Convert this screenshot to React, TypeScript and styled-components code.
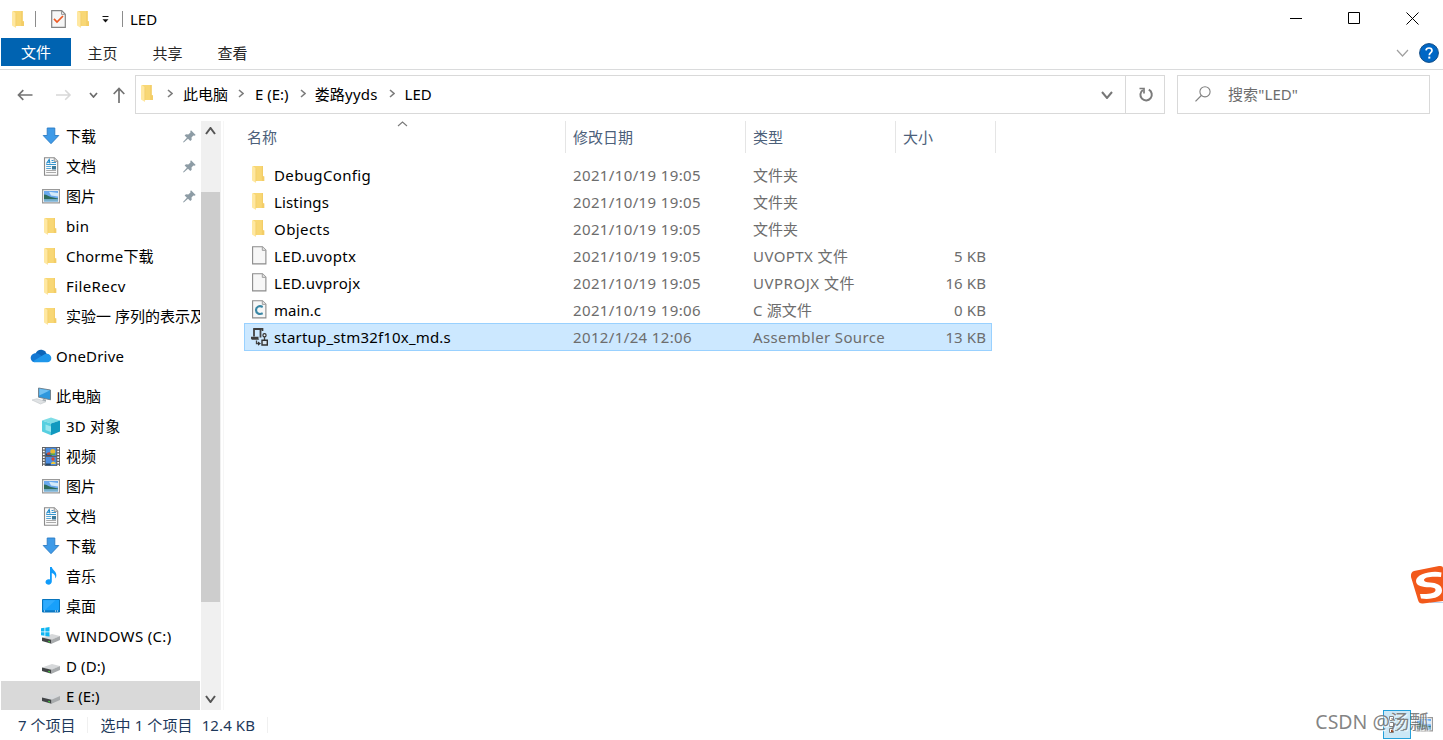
import React from "react";
import styled, { createGlobalStyle, css } from "styled-components";

const GlobalStyle = createGlobalStyle`
  * { box-sizing: border-box; }
  body {
    margin: 0;
    background: #fff;
    overflow: hidden;
    font-family: "Noto Sans", "Noto Sans CJK SC", sans-serif;
    font-size: 15px;
    line-height: 20px;
    color: #000;
  }
  svg { display: block; flex: none; }
`;

type Space = { $gap?: number; $ls?: number };

const Window = styled.div`
  position: relative;
  width: 1443px;
  height: 740px;
  display: flex;
  flex-direction: column;
  overflow: hidden;
  background: #fff;
  white-space: nowrap;
`;

const Label = styled.span<Space>`
  margin-left: ${(p) => p.$gap ?? 0}px;
  letter-spacing: ${(p) => p.$ls ?? 0}px;
  flex: none;
`;

const Slot = styled.span<Space>`
  margin-left: ${(p) => p.$gap ?? 0}px;
  flex: none;
`;

/* ---- title bar and ribbon ---- */
const TitleBar = styled.header`
  height: 38px;
  display: flex;
  align-items: center;
  padding-left: 12px;
`;
const Divider = styled.i<Space>`
  width: 1px;
  height: 16px;
  margin-left: ${(p) => p.$gap ?? 0}px;
  background: #8c8c8c;
`;
const WindowButtons = styled.div`
  margin-left: auto;
  display: flex;
  align-items: center;
  gap: 45.5px;
  padding: 0 24px 1px 0;
`;
const Ribbon = styled.nav`
  height: 32px;
  display: flex;
  align-items: flex-start;
  padding-left: 1px;
  border-bottom: 1px solid #dadbdc;
`;
const Tab = styled.div<{ $active?: boolean }>`
  width: ${(p) => (p.$active ? 70 : 65)}px;
  height: 28px;
  padding-top: ${(p) => (p.$active ? 4 : 5)}px;
  padding-right: ${(p) => (p.$active ? 0 : 2)}px;
  text-align: center;
  color: #262626;
  ${(p) => p.$active && css`
    background: #0063b1;
    color: #fff;
  `}
`;
const RibbonTools = styled.div`
  margin-left: auto;
  display: flex;
  align-items: center;
  gap: 10px;
  padding: 5px 4px 0 0;
`;

/* ---- address bar ---- */
const AddressRow = styled.div`
  height: 51px;
  display: flex;
  align-items: flex-start;
  padding: 5px 13px 0 17px;
`;
const NavButtons = styled.div`
  width: 118px;
  height: 39px;
  display: flex;
  align-items: center;
`;
const AddressBox = styled.div`
  width: 991px;
  height: 39px;
  display: flex;
  align-items: center;
  padding: 0 12px 2px 5px;
  border: 1px solid #d9d9d9;
`;
const Push = styled.span`
  margin-left: auto;
  padding-top: 3px;
`;
const RefreshBox = styled.div`
  width: 39px;
  height: 39px;
  display: flex;
  align-items: center;
  justify-content: center;
  padding-left: 2px;
  border: 1px solid #d9d9d9;
  border-left: 0;
`;
const SearchBox = styled.div`
  width: 253px;
  height: 39px;
  margin-left: 12px;
  padding: 0 0 2px 17px;
  display: flex;
  align-items: center;
  border: 1px solid #d9d9d9;
  color: #6d6d6d;
`;

/* ---- body ---- */
const Body = styled.main`
  height: 589px;
  display: flex;
`;
const Sidebar = styled.aside`
  width: 200px;
  height: 589px;
  padding-left: 1px;
  overflow: hidden;
`;
const NavRow = styled.div<{ $level: number; $spaced?: boolean; $selected?: boolean }>`
  height: 30px;
  margin-top: ${(p) => (p.$spaced ? 10 : 0)}px;
  padding-left: ${(p) => (p.$level === 1 ? 29 : 39)}px;
  display: flex;
  align-items: center;
  background: ${(p) => (p.$selected ? "#d9d9d9" : "transparent")};
`;
const NavIcon = styled.span`
  width: 22px;
  flex: none;
  display: flex;
  justify-content: center;
`;
const NavLabel = styled.span<Space>`
  margin-left: 4px;
  letter-spacing: ${(p) => p.$ls ?? 0}px;
`;
const PinSlot = styled.span`
  margin-left: auto;
  padding-right: 4px;
`;
const Scrollbar = styled.div`
  width: 20px;
  margin-left: 1px;
  display: flex;
  flex-direction: column;
  align-items: center;
  justify-content: space-between;
  background: #f0f0f0;
`;
const ScrollEnd = styled.div`
  height: 21px;
  padding: 0 2px 1px 0;
  display: flex;
  align-items: center;
`;
const Thumb = styled.div`
  width: 19px;
  height: 410px;
  margin: 50px 1px auto 0;
  background: #cdcdcd;
`;
const FilePane = styled.section`
  margin-left: 2px;
  border-left: 1px solid #f6f6f6;
  flex: 1;
`;
const HeaderRow = styled.div`
  height: 32px;
  margin-left: 15px;
  display: flex;
`;
const HeaderCell = styled.div<{ $w: number; $first?: boolean }>`
  width: ${(p) => p.$w}px;
  padding: 6px 0 0 ${(p) => (p.$first ? 8 : 7)}px;
  border-right: 1px solid #e5e5e5;
  color: #4c607a;
  display: flex;
`;
const SortMark = styled.span`
  margin: -6px 0 0 120px;
`;
const FileList = styled.div`
  margin: 8px 0 0 20px;
`;
const FileRow = styled.div<{ $selected?: boolean }>`
  width: 748px;
  height: 27px;
  display: flex;
  align-items: center;
  color: #6d6d6d;
  ${(p) => p.$selected && css`
    height: 28px;
    padding-bottom: 1px;
    background: #cce8ff;
    box-shadow: inset 0 0 0 1px #99d1ff;
  `}
`;
const FileIcon = styled.span`
  width: 30px;
  flex: none;
  display: flex;
  justify-content: center;
`;
const NameCell = styled.span<Space>`
  width: 299px;
  color: #000;
  letter-spacing: ${(p) => p.$ls ?? 0}px;
`;
const DateCell = styled.span`
  width: 180px;
  letter-spacing: 0.37px;
`;
const KindCell = styled.span<Space>`
  width: 150px;
  letter-spacing: ${(p) => p.$ls ?? 0}px;
`;
const SizeCell = styled.span`
  width: 83px;
  text-align: right;
  letter-spacing: 0.1px;
`;

/* ---- status bar and overlays ---- */
const StatusBar = styled.footer`
  height: 29px;
  display: flex;
  align-items: center;
  padding: 0 10px 0 18px;
  color: #1e395b;
`;
const StatusSplit = styled.i<Space>`
  width: 1px;
  height: 16px;
  margin-left: ${(p) => p.$gap ?? 0}px;
  background: #f0f0f0;
`;
const ViewModes = styled.div`
  margin-left: auto;
  display: flex;
  align-items: center;
  gap: 4px;
`;
const ViewMode = styled.div`
  width: 28px;
  height: 29px;
  display: flex;
  align-items: center;
  justify-content: center;
  background: #cce8f6;
  border: 1px solid #26a0da;
`;
const Watermark = styled.div`
  position: absolute;
  right: 14px;
  top: 709px;
  font-size: 19.5px;
  line-height: 26px;
  color: rgba(110, 110, 110, 0.85);
  text-shadow: 1px 1px 1px rgba(255, 255, 255, 0.9);
`;
const ImeBadge = styled.div`
  position: absolute;
  right: 0;
  top: 564px;
`;

/* ---- icons ---- */
const Folder = ({ h = 17 }: { h?: number }) => (
  <svg width="13" height={h} viewBox="0 0 13 17" preserveAspectRatio="none">
    <path d="M1 0h9.5v10.2H12V15H1z" fill="#f8d775" />
    <path d="M9.3 0h1.4v10.4H12V15H9.3z" fill="#f3cd67" />
    <path d="M0 .3h1.2L4 2.4V17L0 14.6z" fill="#ffe8a1" />
    <path d="M3.6 2.2h.6v13h-.6z" fill="#edc65e" />
  </svg>
);
/* Row folder with one empty column on the right, so it sits left of centre. */
const RowFolder = ({ h = 17 }: { h?: number }) => (
  <svg width="15" height={h} viewBox="0 0 15 17" preserveAspectRatio="none">
    <path d="M1 0h10v10.200h1.200V15H1z" fill="#f8d775" />
    <path d="M9.800 0H11v10.400h1.200V15H9.800z" fill="#f3cd67" />
    <path d="M0 .3h1.200L4 2.400V17L0 14.600z" fill="#ffe8a1" />
    <path d="M3.600 2.200h.6v13h-.6z" fill="#edc65e" />
  </svg>
);
const CheckDoc = () => (
  <svg width="15" height="18" viewBox="0 0 15 18">
    <path d="M.7.7h10l3.6 3.6v13H.7z" fill="#f6f6f6" stroke="#848484" strokeWidth="1.2" />
    <path d="M10.5.8v3.6h3.7" fill="none" stroke="#9a9a9a" />
    <path d="M3 8.8l3 3.2L12 6" fill="none" stroke="#ee5a24" strokeWidth="1.7" />
  </svg>
);
const QuickMenu = () => (
  <svg width="8" height="8" viewBox="0 0 8 8">
    <path d="M.5 1h6v1.100h-6zM.5 4.200h6L3.500 7.500z" fill="#111" />
  </svg>
);
const Chevron = ({ w = 9, h = 5, dir = "down", color = "#6b6b6b", sw = 1.7 }: {
  w?: number; h?: number; dir?: "down" | "up" | "right"; color?: string; sw?: number;
}) => {
  const d = dir === "down" ? `M1 1L${w / 2} ${h - 1}L${w - 1} 1`
    : dir === "up" ? `M1 ${h - 1}L${w / 2} 1L${w - 1} ${h - 1}`
    : `M1 1L${w - 1} ${h / 2}L1 ${h - 1}`;
  return (
    <svg width={w} height={h} viewBox={`0 0 ${w} ${h}`}>
      <path d={d} fill="none" stroke={color} strokeWidth={sw} />
    </svg>
  );
};
const Crumb = () => <Chevron dir="right" w={6} h={9} color="#7d7d7d" sw={1.6} />;
const Arrow = ({ up }: { up?: boolean }) => (
  <svg width="16" height="16" viewBox="0 0 16 16">
    <path
      d={up ? "M8 16.500V1.500M2.700 7L8 1.500L13.300 7" : "M15.500 8H1.500M6.300 3.200L1.500 8L6.300 12.800"}
      fill="none" stroke="#737373" strokeWidth="1.700"
    />
  </svg>
);
const Forward = () => (
  <svg width="16" height="16" viewBox="0 0 16 16">
    <path d="M0 8h14M9.200 3.200L14 8L9.200 12.800" fill="none" stroke="#d8d8d8" strokeWidth="1.600" />
  </svg>
);
const Refresh = () => (
  <svg width="16" height="17" viewBox="0 0 16 17">
    <path d="M10.800 3.700A5.700 5.700 0 1 1 4.900 4" fill="none" stroke="#7b7b7b" strokeWidth="2" />
    <path d="M1.500 2.500h4.500v5" fill="none" stroke="#7b7b7b" strokeWidth="1.700" />
  </svg>
);
const Search = () => (
  <svg width="16" height="16" viewBox="0 0 16 16">
    <circle cx="10" cy="5.800" r="5.100" fill="none" stroke="#808080" strokeWidth="1.100" />
    <path d="M6.300 9.500L.5 15.300" stroke="#808080" strokeWidth="1.200" />
  </svg>
);
const Help = () => (
  <svg width="20" height="20" viewBox="0 0 20 20">
    <circle cx="10" cy="10" r="9.400" fill="#0067c5" stroke="#124d86" />
    <path d="M7 7.300C7.200 5.600 8.500 5 10 5c1.700 0 3 .9 3 2.500 0 2.100-2.700 2.200-2.700 4.700" fill="none" stroke="#fff" strokeWidth="1.700" />
    <path d="M9.300 13.600h2v2h-2z" fill="#fff" />
  </svg>
);
const Download = () => (
  <svg width="18" height="18" viewBox="0 0 18 18">
    <path d="M5.200 1h7.600v7.500h4L9 16.700 1.200 8.500h4z" fill="#3f9be8" stroke="#2b7cc4" strokeWidth=".9" />
  </svg>
);
const Document = () => (
  <svg width="16" height="19" viewBox="0 0 16 19">
    <path d="M1.500.8h9.800l3.400 3.400v14H1.500z" fill="#fafafa" stroke="#8a8a8a" strokeWidth="1.100" />
    <path d="M11.200.9v3.500h3.400" fill="#ddd" stroke="#8a8a8a" strokeWidth=".8" />
    <path d="M3.500 6.500L6.200 2.500 7 6.500M4.600 5.300h2.300" fill="none" stroke="#1e88c9" strokeWidth="1.100" />
    <path d="M8.500 3.500h2M8.500 5.500H13M3.200 7.500H13" stroke="#3796cf" />
    <path d="M3.200 9.500h5M3.200 11.500h5" stroke="#56a8d8" />
    <path d="M9 9h4v3.500H9z" fill="#3d7a9a" />
    <path d="M3.200 13.500H13M3.200 15.500H13" stroke="#aaa" />
  </svg>
);
const Picture = () => (
  <svg width="18" height="15" viewBox="0 0 18 15">
    <path d="M.6.6h16.800v13.300H.6z" fill="#fff" stroke="#999" strokeWidth="1.200" />
    <path d="M2 2h14v10.500H2z" fill="#6aa9ee" />
    <path d="M7 2.800L16 4v3.500L9 6.500z" fill="#d4eafa" />
    <path d="M2 5.500c3 0 4 1.500 7 2.500l7 1.500v1H2z" fill="#2f6c5c" />
    <path d="M2 10.200h14v2.300H2z" fill="#7ab2cf" />
  </svg>
);
const Cloud = () => (
  <svg width="22" height="14" viewBox="0 0 22 14">
    <path d="M5.500 4.500C7 .8 11.500-.6 15 2.300l1.700 2.500L10 9z" fill="#0a64b8" />
    <path d="M1 10.500C-.2 7.200 2.500 4 6 4.200c1.500 0 2.600.5 3.600 1.200l6 4.300-11 3.600C3 13.300 1.500 12 1 10.500z" fill="#1277d2" />
    <path d="M3 12.200L14.500 5.200c3.500-1.600 6.500.7 6.800 3.500.2 2.800-1.700 4.600-4 4.600H6c-1.200 0-2.200-.3-3-1.100z" fill="#1e96ea" />
  </svg>
);
const Computer = () => (
  <svg width="21" height="18" viewBox="0 0 21 18">
    <path d="M7.500 1l12 2v9.800l-12-2.600z" fill="#2e97dd" stroke="#6f7d87" strokeWidth=".9" />
    <path d="M8.300 1.800L18.700 3.500 8.300 8.500z" fill="#72c1f2" />
    <path d="M12 12l3 .6v2l-4-.6z" fill="#a3abb0" />
    <path d="M1 13l5-1.300 9 3L9.500 17z" fill="#dfe2e4" stroke="#bfc4c8" strokeWidth=".6" />
  </svg>
);
const Cube = () => (
  <svg width="20" height="19" viewBox="0 0 20 19">
    <path d="M1 3.500L10 .5l9 3-9 3z" fill="#7fdde6" />
    <path d="M1 3.500l9 3v11.800L1 14.500z" fill="#57cfe0" />
    <path d="M4.500 7.500l5.500 2v5.500l-5.500-2z" fill="#b6eff3" opacity=".7" />
    <path d="M10 6.500l9-3v11l-9 3.800z" fill="#1199bf" />
  </svg>
);
const Video = () => (
  <svg width="18" height="19" viewBox="0 0 18 19">
    <path d="M0 0h18v19H0z" fill="#606060" />
    <path d="M1.800 1v18M16.200 1v18" stroke="#fff" strokeWidth="1.800" strokeDasharray="1.500 1.300" />
    <path d="M3.700.8h10.600v8H3.700zM3.700 10h10.600v8.300H3.700z" fill="#4a8de0" />
    <path d="M3.700 6.500h6v2.300h-6zM3.700 16.500h5v1.800h-5z" fill="#264769" />
    <circle cx="10.800" cy="4.600" r="2.500" fill="#e8b931" />
    <path d="M5 6l2.500-1L9 7.800H5z" fill="#c64d35" />
    <circle cx="11" cy="12" r="1.700" fill="#d54735" />
    <path d="M9 16l2-1.500 2.500 1v1.500H9z" fill="#efc83b" />
    <path d="M8.300 6.500h5v1.500h-5z" fill="#55a846" />
  </svg>
);
const Music = () => (
  <svg width="14" height="18" viewBox="0 0 14 18">
    <path d="M6 0h1.800c.3 3 5.400 4.500 4.500 9.300-.2 1.100-.6 1.700-1.100 2.300.5-3-.9-4.800-3.400-5.600v8.500C7.800 17 5.400 18 3.600 17.500c-3.200-.8-2.500-5 1-5.200.6 0 1 .1 1.400.3z" fill="#109bfa" />
  </svg>
);
const Desktop = () => (
  <svg width="18" height="14" viewBox="0 0 18 14">
    <path d="M.5.500h17v12.500H.5z" fill="#18a0fb" stroke="#0875bd" />
    <path d="M1.500 1.300h12L3 11H1.500z" fill="#47b5ff" opacity=".5" />
    <path d="M1 12h16" stroke="#0767a9" />
    <path d="M2 12h1M13 12h1M15 12h1" stroke="#fff" />
  </svg>
);
const Drive = ({ win }: { win?: boolean }) => (
  <svg width="20" height="18" viewBox="0 0 20 18">
    <path d="M1 10.500L11 7l8 2-8.500 4z" fill="#d6d8da" />
    <path d="M1 10.500l9.500 2.200v4L1 14z" fill="#424547" />
    <path d="M10.500 12.700L19 9v4l-8.500 3.700z" fill="#a8abad" />
    <path d="M7.300 13.800l1.700.4v1.300l-1.700-.4z" fill="#42d33a" />
    {win && <path d="M0 1.300l3.500-.5v3.600H0zM4.300.7L8.500 0v4.400H4.300zM0 5.200h3.500v3.600L0 8.300zM4.300 5.200h4.200v4.300l-4.200-.6z" fill="#10b6f2" />}
  </svg>
);
const Pin = () => (
  <svg width="13" height="13" viewBox="0 0 13 13">
    <path d="M8 .3l4.700 4.600-1.300.8-1-.2-1.900 2 .2 2.300-1.400 1.300-2.300-2.300L.7 12.500 0 12l3.900-4.200L1.600 5.500 3 4.200l2.300.2 2.200-2L7.300 1.300z" fill="#8d9ca5" />
  </svg>
);
const Page = ({ c }: { c?: boolean }) => (
  <svg width="15" height="19" viewBox="0 0 15 19">
    <path d="M.6.700h9.800l3.500 3.500v13.700H.6z" fill="#f7f7f7" stroke="#8c8c8c" strokeWidth="1.100" />
    <path d="M10.300.8v3.600h3.500" fill="#e3e3e3" stroke="#999" strokeWidth=".9" />
    {c && <path d="M10.700 6.900C7.300 5.300 4 6.700 4 10.100c0 3.400 3.300 4.800 6.700 3.200" fill="none" stroke="#3a87a5" strokeWidth="2.200" />}
  </svg>
);
const Assembly = () => (
  <svg width="19" height="20" viewBox="0 0 19 20">
    <path d="M4 9.500V2.200h6.500v8.300" fill="none" stroke="#444" strokeWidth="1.800" />
    <path d="M3.500 1.800h9v2.200" fill="none" stroke="#3d3d3d" strokeWidth="1.700" />
    <path d="M1 9.700h7.500v1.600c0 1 .6 1.500 1.500 1.500H2.800C1.500 12.800 1 12 1 11z" fill="#3d3d3d" />
    <path d="M6.500 13.500v3H9M14.500 9.500V13" stroke="#444" strokeWidth="1.300" fill="none" />
    <circle cx="14.500" cy="8.300" r="1.600" fill="#e8f4ff" stroke="#333" strokeWidth="1.200" />
    <path d="M12 13.200h5.300v4.800H12z" fill="#d7e5f0" stroke="#333" strokeWidth="1.400" />
    <path d="M8 14.500l3 2.100-3 2.100z" fill="#333" />
  </svg>
);
const DetailsView = () => (
  <svg width="16" height="17" viewBox="0 0 16 17">
    <path d="M.5.500h4v4h-4zM.5 6.500h4v4h-4zM.5 12.500h4v4h-4z" fill="#fff" stroke="#808080" />
    <path d="M2 14h2v2H2z" fill="#98411d" />
    <path d="M6 2.500h3M11 2.500h4M6 8.500h3M11 8.500h4M6 14.500h3M11 14.500h4" stroke="#8b9aa3" />
  </svg>
);
const ImeLogo = () => (
  <svg width="33" height="42" viewBox="0 0 33 42">
    <path d="M20 38.500h13" stroke="#b9d1ef" />
    <path d="M4 7L29 2q4-.5 4 2v33l-20 2.500q-4 .5-5-3.500L1 13q-.5-5 3-6z" fill="#f2591b" />
    <path d="M31.500 8.500C22 6 6 10 6 17c0 5.500 7 6 13 6.300 4.500.2 6.500.8 6.500 2.700 0 3-6 4.500-15.500 4l1 4.500C22 36 32 33 32 26.500c0-6-6-7.500-12-8-4-.3-6-.8-6-2.500 0-3 8-4 17-3z" fill="#fff" />
  </svg>
);

type NavItem = { text: string; icon: React.ReactNode; level?: number; spaced?: boolean; pin?: boolean; selected?: boolean; ls?: number };
const navItems: NavItem[] = [
  { text: "下载", icon: <Download />, pin: true },
  { text: "文档", icon: <Document />, pin: true },
  { text: "图片", icon: <Picture />, pin: true },
  { text: "bin", icon: <RowFolder />, ls: 0.3 },
  { text: "Chorme下载", icon: <RowFolder />, ls: 0.15 },
  { text: "FileRecv", icon: <RowFolder />, ls: 0.4 },
  { text: "实验一 序列的表示及", icon: <RowFolder /> },
  { text: "OneDrive", icon: <Cloud />, level: 1, spaced: true, ls: 0.2 },
  { text: "此电脑", icon: <Computer />, level: 1, spaced: true },
  { text: "3D 对象", icon: <Cube />, ls: 0.2 },
  { text: "视频", icon: <Video /> },
  { text: "图片", icon: <Picture /> },
  { text: "文档", icon: <Document /> },
  { text: "下载", icon: <Download /> },
  { text: "音乐", icon: <Music /> },
  { text: "桌面", icon: <Desktop /> },
  { text: "WINDOWS (C:)", icon: <Drive win />, ls: 0.33 },
  { text: "D (D:)", icon: <Drive />, ls: 0.1 },
  { text: "E (E:)", icon: <Drive />, selected: true },
];

type FileItem = { name: string; date: string; kind: string; size?: string; icon: React.ReactNode; selected?: boolean; ls?: number; kls?: number };
const files: FileItem[] = [
  { name: "DebugConfig", date: "2021/10/19 19:05", kind: "文件夹", icon: <RowFolder />, ls: 0.36 },
  { name: "Listings", date: "2021/10/19 19:05", kind: "文件夹", icon: <RowFolder />, ls: 0.15 },
  { name: "Objects", date: "2021/10/19 19:05", kind: "文件夹", icon: <RowFolder />, ls: 0.42 },
  { name: "LED.uvoptx", date: "2021/10/19 19:05", kind: "UVOPTX 文件", size: "5 KB", icon: <Page />, ls: 0.3, kls: 0.42 },
  { name: "LED.uvprojx", date: "2021/10/19 19:05", kind: "UVPROJX 文件", size: "16 KB", icon: <Page />, ls: 0.27, kls: 0.52 },
  { name: "main.c", date: "2021/10/19 19:06", kind: "C 源文件", size: "0 KB", icon: <Page c />, ls: 0.05, kls: 0.15 },
  { name: "startup_stm32f10x_md.s", date: "2012/1/24 12:06", kind: "Assembler Source", size: "13 KB", icon: <Assembly />, selected: true, ls: 0.18, kls: 0.37 },
];

export default function App() {
  return (
    <Window>
      <GlobalStyle />
      <TitleBar>
        <Folder />
        <Divider $gap={10} />
        <Slot $gap={15}><CheckDoc /></Slot>
        <Slot $gap={11}><Folder /></Slot>
        <Slot $gap={12}><QuickMenu /></Slot>
        <Divider $gap={12} />
        <Label $gap={7}>LED</Label>
        <WindowButtons>
          <svg width="13" height="13"><path d="M1 6.500h12" stroke="#000" /></svg>
          <svg width="13" height="13"><path d="M.5.500h11v11H.5z" fill="none" stroke="#000" /></svg>
          <svg width="13" height="13"><path d="M.5.500l12 12M12.500.5l-12 12" stroke="#000" /></svg>
        </WindowButtons>
      </TitleBar>
      <Ribbon>
        <Tab $active>文件</Tab>
        <Tab>主页</Tab>
        <Tab>共享</Tab>
        <Tab>查看</Tab>
        <RibbonTools>
          <Chevron w={13} h={8} color="#a0a0a0" sw={1.200} />
          <Help />
        </RibbonTools>
      </Ribbon>
      <AddressRow>
        <NavButtons>
          <Slot><Arrow /></Slot>
          <Slot $gap={23}><Forward /></Slot>
          <Slot $gap={17}><Chevron w={9} h={6} /></Slot>
          <Slot $gap={13}><Arrow up /></Slot>
        </NavButtons>
        <AddressBox>
          <Folder />
          <Slot $gap={13}><Crumb /></Slot>
          <Label $gap={10}>此电脑</Label>
          <Slot $gap={10}><Crumb /></Slot>
          <Label $gap={11}>E (E:)</Label>
          <Slot $gap={11}><Crumb /></Slot>
          <Label $gap={9} $ls={0.2}>娄路yyds</Label>
          <Slot $gap={11}><Crumb /></Slot>
          <Label $gap={10}>LED</Label>
          <Push><Chevron w={12} h={8} sw={2} color="#777" /></Push>
        </AddressBox>
        <RefreshBox><Refresh /></RefreshBox>
        <SearchBox>
          <Search />
          <Label $gap={17} $ls={0.1}>搜索"LED"</Label>
        </SearchBox>
      </AddressRow>
      <Body>
        <Sidebar>
          {navItems.map((n, i) => (
            <NavRow key={i} $level={n.level ?? 2} $spaced={n.spaced} $selected={n.selected}>
              <NavIcon>{n.icon}</NavIcon>
              <NavLabel $ls={n.ls}>{n.text}</NavLabel>
              {n.pin && <PinSlot><Pin /></PinSlot>}
            </NavRow>
          ))}
        </Sidebar>
        <Scrollbar>
          <ScrollEnd><Chevron dir="up" w={11} h={8} color="#555" sw={2} /></ScrollEnd>
          <Thumb />
          <ScrollEnd><Chevron w={11} h={8} color="#555" sw={2} /></ScrollEnd>
        </Scrollbar>
        <FilePane>
          <HeaderRow>
            <HeaderCell $w={327} $first>
              名称
              <SortMark><Chevron dir="up" w={11} h={6} color="#7a7a7a" sw={1.100} /></SortMark>
            </HeaderCell>
            <HeaderCell $w={180}>修改日期</HeaderCell>
            <HeaderCell $w={150}>类型</HeaderCell>
            <HeaderCell $w={100}>大小</HeaderCell>
          </HeaderRow>
          <FileList>
            {files.map((f) => (
              <FileRow key={f.name} $selected={f.selected}>
                <FileIcon>{f.icon}</FileIcon>
                <NameCell $ls={f.ls}>{f.name}</NameCell>
                <DateCell>{f.date}</DateCell>
                <KindCell $ls={f.kls}>{f.kind}</KindCell>
                <SizeCell>{f.size}</SizeCell>
              </FileRow>
            ))}
          </FileList>
        </FilePane>
      </Body>
      <StatusBar>
        <Label>7 个项目</Label>
        <StatusSplit $gap={12} />
        <Label $gap={12} $ls={0.1}>选中 1 个项目</Label>
        <Label $gap={9} $ls={0.1}>12.4 KB</Label>
        <StatusSplit $gap={12} />
        <ViewModes>
          <ViewMode><DetailsView /></ViewMode>
          <Picture />
        </ViewModes>
      </StatusBar>
      <Watermark>CSDN @汤瓢</Watermark>
      <ImeBadge><ImeLogo /></ImeBadge>
    </Window>
  );
}
